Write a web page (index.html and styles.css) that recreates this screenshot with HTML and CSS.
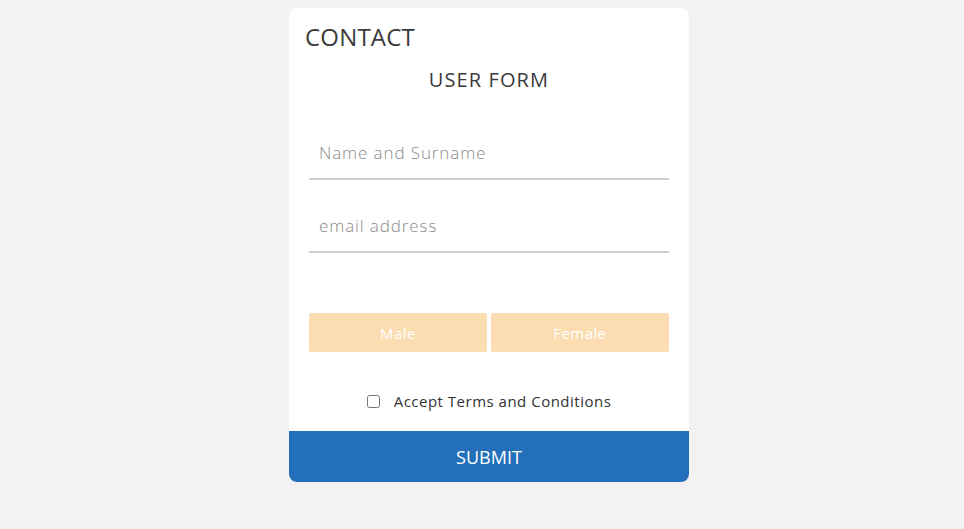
FILE: index.html
```html
<!DOCTYPE html>
<html lang="en">
<head>
<meta charset="utf-8">
<title>Contact</title>
<link rel="stylesheet" href="styles.css">
</head>
<body>
<div class="page">
  <form class="card">
    <h1 class="title">CONTACT</h1>
    <h2 class="subtitle">USER FORM</h2>
    <div class="fields">
      <input class="field" type="text" placeholder="Name and Surname">
      <input class="field" type="text" placeholder="email address">
    </div>
    <div class="genders">
      <button type="button" class="gender">Male</button>
      <button type="button" class="gender">Female</button>
    </div>
    <label class="terms"><input type="checkbox" class="check"><span>Accept Terms and Conditions</span></label>
    <button type="button" class="submit">SUBMIT</button>
  </form>
</div>
</body>
</html>
```
FILE: styles.css
```css
html, body {
  margin: 0;
  padding: 0;
  background: #f2f2f2;
  font-family: "Open Sans", "Noto Sans", sans-serif;
}
.page {
  display: flex;
  justify-content: center;
  padding: 8px 0 0 14px;
}
.card {
  width: 400px;
  background: #fff;
  border-radius: 8px;
  display: flex;
  flex-direction: column;
  overflow: hidden;
}
.title {
  margin: 0;
  padding: 14px 16px 0;
  font-size: 24px;
  line-height: 30px;
  font-weight: 400;
  color: #3b3b3b;
  letter-spacing: 0.2px;
}
.subtitle {
  margin: 0;
  padding-top: 15px;
  text-align: center;
  font-size: 20px;
  line-height: 26px;
  font-weight: 400;
  color: #3b3b3b;
  letter-spacing: 1.1px;
}
.fields {
  display: flex;
  flex-direction: column;
  gap: 18px;
  padding: 32px 20px 0;
}
.field {
  box-sizing: border-box;
  height: 55px;
  border: none;
  border-bottom: 2px solid #cccccc;
  padding: 2px 10px 0;
  font-family: inherit;
  font-size: 17px;
  font-weight: 300;
  color: #333;
  letter-spacing: 0.9px;
  outline: none;
}
.field::placeholder {
  color: #8a8a8a;
}
.genders {
  display: flex;
  gap: 4px;
  padding: 60px 20px 0;
}
.gender {
  flex: 1;
  height: 39px;
  border: none;
  border-radius: 2px;
  background: #fcdcb1;
  color: #fff;
  font-family: inherit;
  font-size: 15px;
  font-weight: 500;
  letter-spacing: 0.5px;
}
.terms {
  display: flex;
  align-items: center;
  justify-content: center;
  gap: 14px;
  padding: 40px 0 21px;
  font-size: 15px;
  color: #333;
  line-height: 18px;
  letter-spacing: 0.5px;
}
.check {
  margin: 0;
  width: 13px;
  height: 13px;
}
.submit {
  height: 51px;
  border: none;
  background: #246fb9;
  color: #fff;
  font-family: inherit;
  font-size: 18px;
}
```
